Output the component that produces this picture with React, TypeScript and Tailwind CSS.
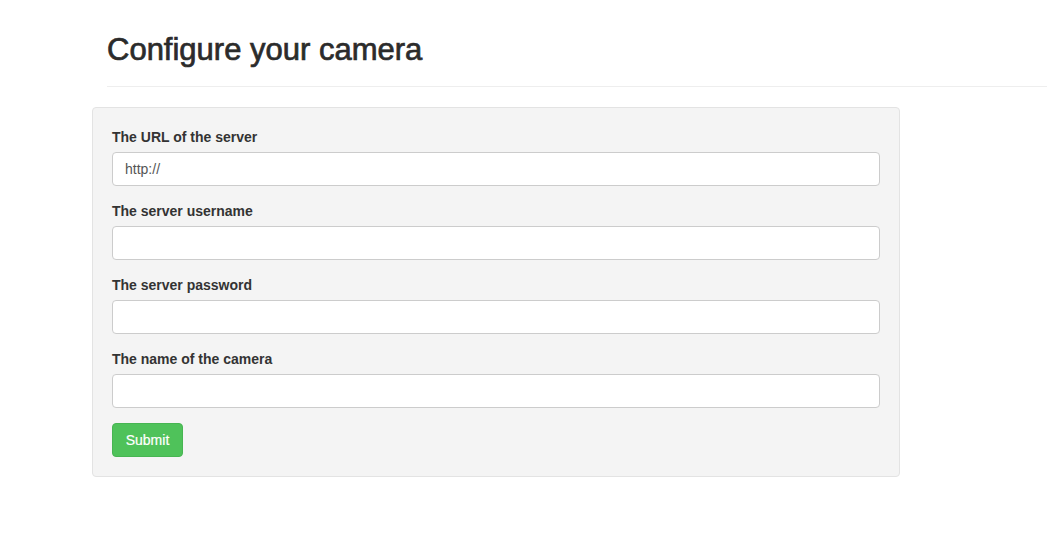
import React from "react"

const fields = [
  { label: "The URL of the server", value: "http://" },
  { label: "The server username", value: "" },
  { label: "The server password", value: "", type: "password" },
  { label: "The name of the camera", value: "" },
]

export default function App() {
  return (
    <div className="min-h-[546px] bg-white text-[#333] font-['Liberation_Sans',Arial,sans-serif] text-[14px] leading-[20px]">
      <div className="ml-[107px] w-[940px] pt-[33px] pb-[19px] border-b border-[#eee]">
        <h1 className="text-[31px] leading-[34px] font-normal text-[#2b2b2b] [-webkit-text-stroke:0.7px_#2b2b2b]">
          Configure your camera
        </h1>
      </div>
      <form
        className="ml-[92px] mt-[20px] w-[808px] bg-[#f4f4f4] border border-[#e3e3e3] rounded-[4px] p-[19px]"
        onSubmit={(e) => e.preventDefault()}
      >
        {fields.map((f, i) => (
          <div key={i} className="mb-[15px]">
            <label className="block font-bold mb-[5px]">{f.label}</label>
            <input
              type={f.type ?? "text"}
              defaultValue={f.value}
              className="block w-full h-[34px] px-[12px] bg-white border border-[#ccc] rounded-[4px] text-[14px] text-[#555] outline-none"
            />
          </div>
        ))}
        <button
          type="submit"
          className="h-[34px] w-[71px] bg-[#4fc25a] border border-[#47b552] rounded-[4px] text-white text-[14px] [-webkit-text-stroke:0.2px_#fff]"
        >
          Submit
        </button>
      </form>
    </div>
  )
}
